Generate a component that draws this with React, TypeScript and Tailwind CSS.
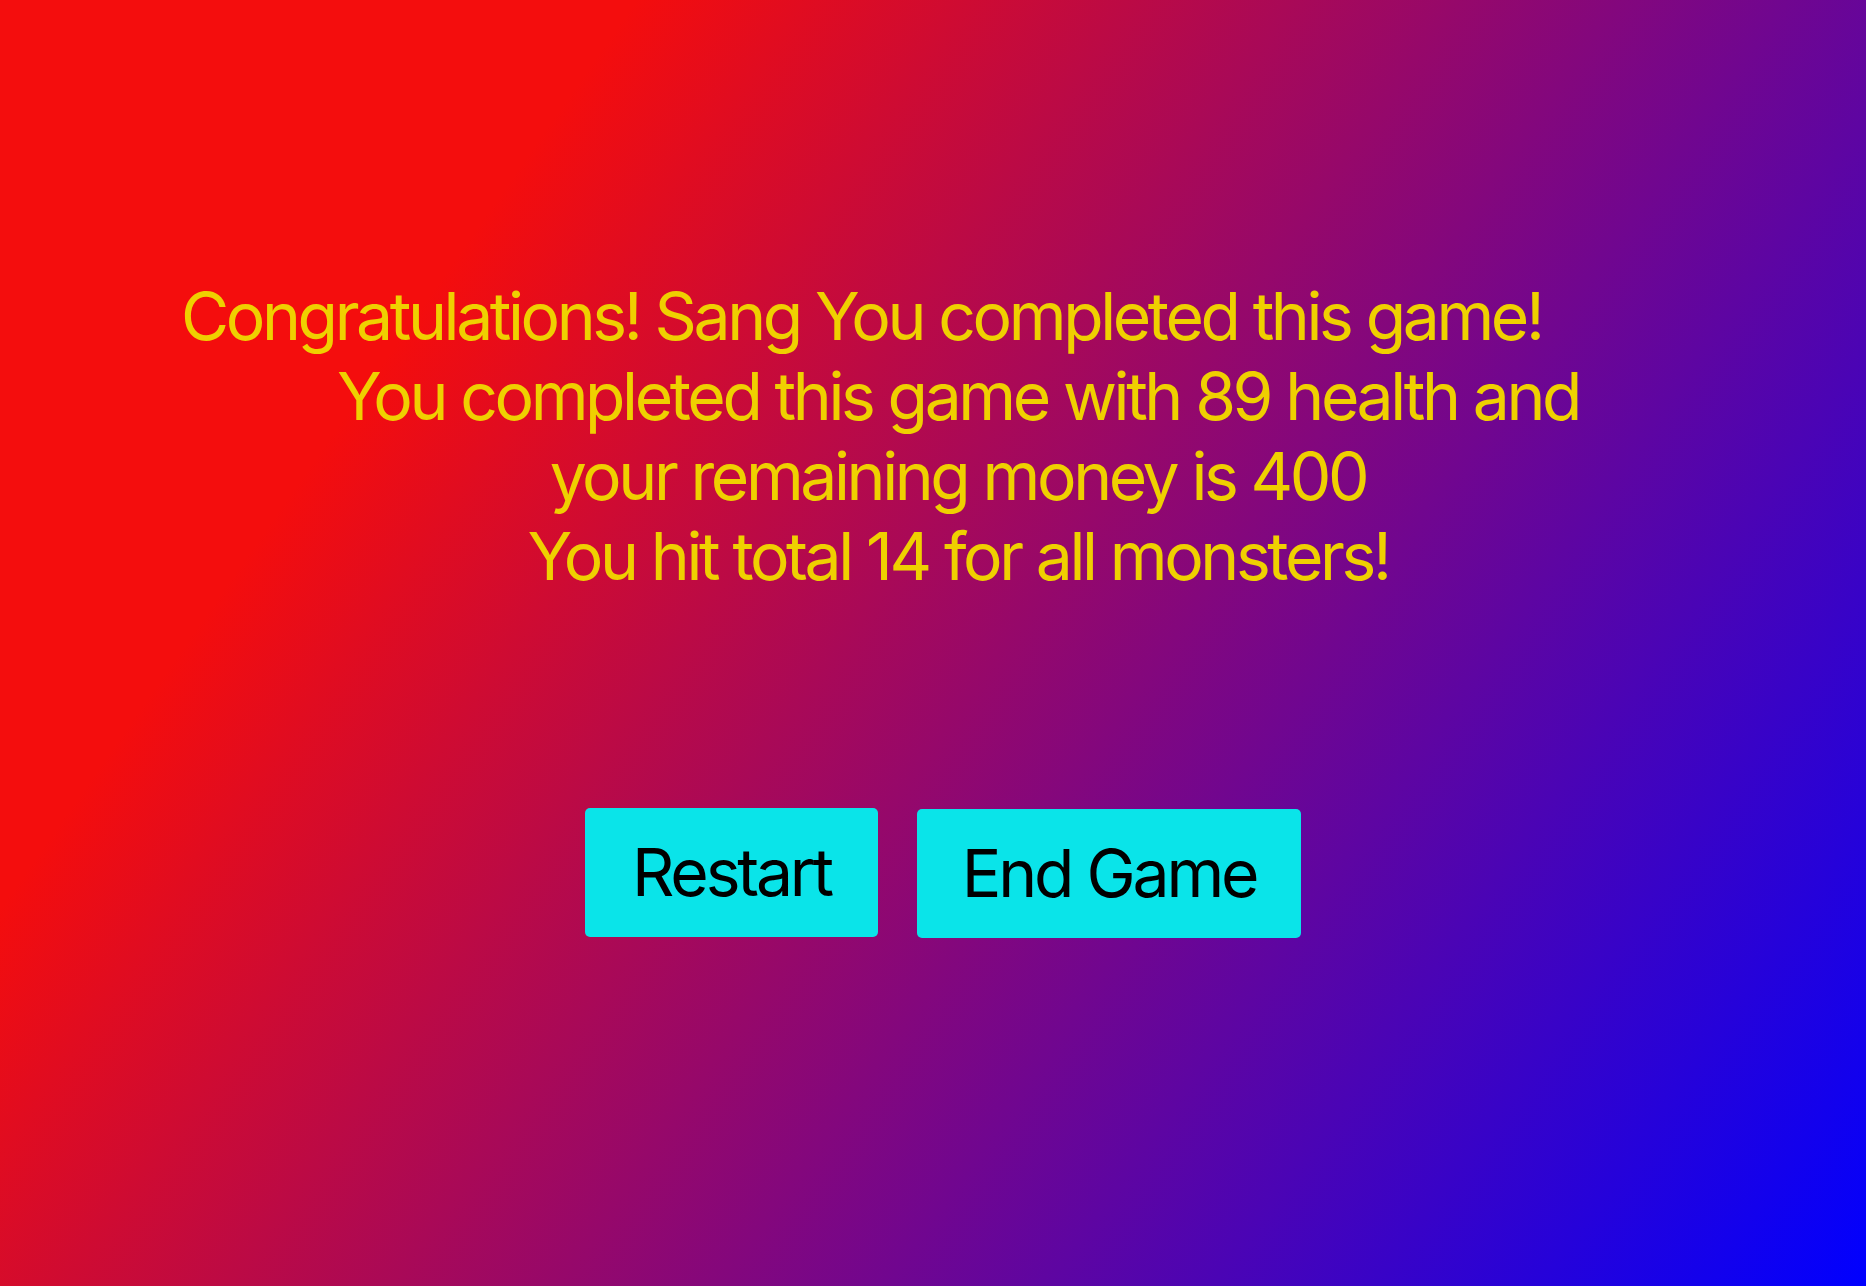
import React from 'react';

const GameOver: React.FC = () => {
  const name = 'Sang';
  const health = 89;
  const money = 400;
  const hits = 14;

  return (
    <div className="min-h-screen w-full bg-[linear-gradient(125deg,#f40d0d_23%,#0000ff_100%)] font-['Inter','Noto_Sans',sans-serif] pt-[276px]">
      <div className="ml-[181px] w-[1554px] text-[66px] leading-[80px] text-[#efd000] tracking-[-3.4px]">
        <div className="text-left">Congratulations! {name} You completed this game!</div>
        <p className="mx-auto w-[1270px] text-center">
          You completed this game with {health} health and your remaining money is {money}
        </p>
        <div className="text-center">You hit total {hits} for all monsters!</div>
      </div>

      <div className="mt-[212px] ml-[585px] flex items-start gap-[39px]">
        <button className="h-[129px] w-[293px] rounded-[5px] bg-[#0ae4e9] text-[66px] text-black tracking-[-3.2px]">
          Restart
        </button>
        <button className="mt-px h-[129px] w-[384px] rounded-[5px] bg-[#0ae4e9] text-[66px] text-black tracking-[-3.2px]">
          End Game
        </button>
      </div>
    </div>
  );
};

export default function App() {
  return <GameOver />;
}
